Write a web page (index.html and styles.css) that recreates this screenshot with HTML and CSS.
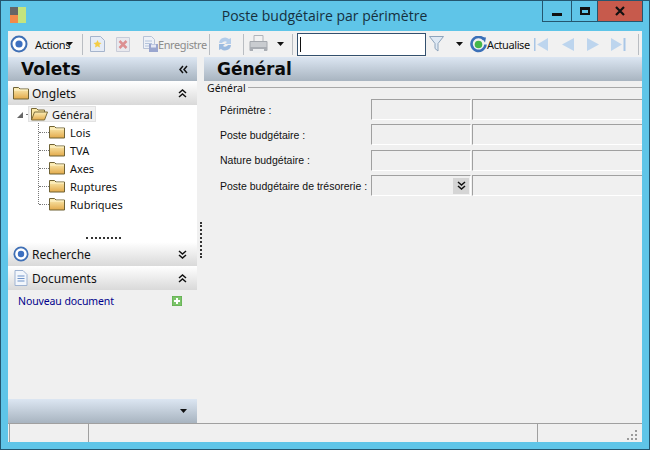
FILE: index.html
```html
<!DOCTYPE html>
<html lang="fr">
<head>
<meta charset="utf-8">
<title>Poste budgétaire par périmètre</title>
<link rel="stylesheet" href="styles.css">
</head>
<body>
<svg class="defs" width="0" height="0">
  <defs>
    <linearGradient id="fold" x1="0" y1="0" x2="0" y2="1"><stop offset="0" stop-color="#fdf0b8"/><stop offset="1" stop-color="#e2a94a"/></linearGradient>
    <symbol id="folder" viewBox="0 0 16 14"><path d="M.5 3V1.500h5L7 3h8.500v10H.5z" fill="url(#fold)" stroke="#6f6235"/><path d="M1 4h14" stroke="#fff6cf"/></symbol>
    <symbol id="target" viewBox="0 0 18 18"><circle cx="9" cy="9" r="7.500" fill="#fff" stroke="#3f6fb5" stroke-width="2"/><circle cx="9" cy="9" r="3.600" fill="#3c6fc0"/></symbol>
    <symbol id="dbl-up" viewBox="0 0 9 9"><path d="M1 4l3.500-3L8 4M1 8l3.500-3L8 8" fill="none" stroke="#111" stroke-width="1.500"/></symbol>
    <symbol id="dbl-down" viewBox="0 0 9 9"><path d="M1 1l3.500 3L8 1M1 5l3.500 3L8 5" fill="none" stroke="#111" stroke-width="1.500"/></symbol>
    <symbol id="caret" viewBox="0 0 7 4"><path d="M0 0h7L3.500 4z" fill="#111"/></symbol>
  </defs>
</svg>
<div class="window">
  <header class="titlebar">
    <svg class="applogo" width="21" height="24" viewBox="0 0 21 24"><rect width="8" height="8" y="0" fill="#666"/><rect x="8" width="8" height="16" fill="#c4e47e"/><rect y="8" width="8" height="8" fill="#f28a4a"/></svg>
    <div class="title">Poste budgétaire par périmètre</div>
    <div class="winbtns">
      <div class="winbtn"><span class="min"></span></div>
      <div class="winbtn"><span class="max"></span></div>
      <div class="winbtn close"><svg width="10" height="10" viewBox="0 0 10 10"><path d="M1 1l8 8M9 1l-8 8" stroke="#111" stroke-width="2.200"/></svg></div>
    </div>
  </header>
  <div class="client">
    <div class="toolbar">
      <svg class="m2" width="18" height="18"><use href="#target"/></svg>
      <span class="tbtext m-actions">Actions</span>
      <svg class="caret" width="7" height="4"><use href="#caret"/></svg>
      <span class="sep s1"></span>
      <svg class="m-new" width="15" height="16" viewBox="0 0 15 16"><path d="M.5.500h10l4 4v11H.5z" fill="#e6ecf6" stroke="#a5b4cc"/><path d="M7.500 4l1.200 2.600 2.800.3-2.100 1.900.6 2.800-2.500-1.400-2.500 1.400.6-2.800L3.500 6.900l2.800-.3z" fill="#f5cd45"/></svg>
      <svg class="m-del" width="14" height="15" viewBox="0 0 14 15"><path d="M.5.500h13v14H.5z" fill="#e9e9ee" stroke="#c8ccd8"/><path d="M3.500 4l7 7M10.500 4l-7 7" stroke="#dc8f92" stroke-width="2.500"/></svg>
      <svg class="m-save" width="15" height="16" viewBox="0 0 15 16"><path d="M.5.500h8l3 3v9H.5z" fill="#eef1f7" stroke="#b8c3d6"/><path d="M2 5h7M2 7.500h7M2 10h7" stroke="#b4c4dc"/><rect x="6" y="8" width="9" height="8" fill="#9aa6cf"/><rect x="8" y="8.500" width="5" height="3" fill="#e4e8f4"/></svg>
      <span class="tbtext dim m-enr">Enregistre</span>
      <span class="sep s2"></span>
      <svg class="m-sync" width="16" height="16" viewBox="0 0 16 16"><path d="M2 7a6 6 0 0 1 10-4l2-1v6H8l2-2a3.500 3.500 0 0 0-5 1z" fill="#b4cdea"/><path d="M14 9a6 6 0 0 1-10 4l-2 1V8h6l-2 2a3.500 3.500 0 0 0 5-1z" fill="#9cbbe0"/></svg>
      <span class="sep s3"></span>
      <svg class="m-print" width="19" height="18" viewBox="0 0 19 18"><path d="M5 .500h9v6H5z" fill="#f2f2f2" stroke="#b0b4ba"/><path d="M1 6.500h17v9H1z" fill="#c9ccd0" stroke="#a4a8ae"/><path d="M1 12h17v4H1z" fill="#a9adb3"/><path d="M4 14h11v4H4z" fill="#eceef0"/></svg>
      <svg class="caret m-c2" width="7" height="4"><use href="#caret"/></svg>
      <span class="sep s4"></span>
      <div class="search" role="textbox" aria-label="Recherche"></div>
      <svg class="m-filter" width="15" height="16" viewBox="0 0 15 16"><path d="M.5.500h14L9 7.500V15L6 12.500v-5z" fill="#dfe9f4" stroke="#8da4bc"/></svg>
      <svg class="caret m-c3" width="7" height="4"><use href="#caret"/></svg>
      <svg class="m-act" width="17" height="17" viewBox="0 0 17 17"><path d="M14 3.500A7 7 0 1 0 15.500 8.500" fill="none" stroke="#3b70b8" stroke-width="2.600"/><path d="M11 1l5 .5-1 5z" fill="#3b70b8"/><circle cx="8.500" cy="8.500" r="3.800" fill="#44b649"/></svg>
      <span class="tbtext m-actu">Actualise</span>
      <svg class="m-nav1" width="14" height="13" viewBox="0 0 14 13"><path d="M.5 0v13" stroke="#a9c6e6" stroke-width="2"/><path d="M14 0v13L3 6.500z" fill="#bdd5ee"/></svg>
      <svg class="m-nav2" width="13" height="13" viewBox="0 0 13 13"><path d="M13 0v13L1 6.500z" fill="#bdd5ee"/></svg>
      <svg class="m-nav3" width="12" height="13" viewBox="0 0 12 13"><path d="M0 0v13l12-6.500z" fill="#bdd5ee"/></svg>
      <svg class="m-nav4" width="15" height="13" viewBox="0 0 15 13"><path d="M0 0v13l11-6.500z" fill="#bdd5ee"/><path d="M13.500 0v13" stroke="#a9c6e6" stroke-width="2"/></svg>
      <span class="sep s5"></span>
    </div>
    <div class="main">
      <aside class="left">
        <div class="hdr">
          <h2>Volets</h2>
          <svg class="chev-left" width="9" height="9" viewBox="0 0 9 9"><path d="M4 1L1 4.500 4 8M8 1L5 4.500 8 8" fill="none" stroke="#111" stroke-width="1.500"/></svg>
        </div>
        <div class="bar">
          <svg class="baricon" width="16" height="14"><use href="#folder"/></svg>
          <span class="bartext">Onglets</span>
          <svg class="barchev" width="9" height="9"><use href="#dbl-up"/></svg>
        </div>
        <div class="treepane">
          <div class="tree">
            <div class="rootrow">
              <svg class="expander" width="6" height="6" viewBox="0 0 6 6"><path d="M6 0v6H0z" fill="#666"/></svg>
              <span class="hline short"></span>
              <div class="selected">
                <svg width="17" height="14" viewBox="0 0 17 14"><path d="M.5 13V1.500h5L7 3h6.500v2" fill="#fbe9a6" stroke="#7a6a38"/><path d="M.5 13l3-8h13l-3 8z" fill="url(#fold)" stroke="#7a6a38"/></svg>
                <span>Général</span>
              </div>
            </div>
            <div class="children">
              <div class="leaf"><span class="hline"></span><svg width="16" height="14"><use href="#folder"/></svg><span>Lois</span></div>
              <div class="leaf"><span class="hline"></span><svg width="16" height="14"><use href="#folder"/></svg><span>TVA</span></div>
              <div class="leaf"><span class="hline"></span><svg width="16" height="14"><use href="#folder"/></svg><span>Axes</span></div>
              <div class="leaf"><span class="hline"></span><svg width="16" height="14"><use href="#folder"/></svg><span>Ruptures</span></div>
              <div class="leaf last"><span class="hline"></span><svg width="16" height="14"><use href="#folder"/></svg><span>Rubriques</span></div>
            </div>
          </div>
          <div class="grip"></div>
        </div>
        <div class="bar">
          <svg class="baricon" width="16" height="16"><use href="#target"/></svg>
          <span class="bartext">Recherche</span>
          <svg class="barchev" width="9" height="9"><use href="#dbl-down"/></svg>
        </div>
        <div class="bar">
          <svg class="baricon" width="13" height="16" viewBox="0 0 13 16"><path d="M.5.500h8l4 4v11H.5z" fill="#f2f6fc" stroke="#9fb3d1"/><path d="M3 6h7M3 8.500h7M3 11h7" stroke="#6f93c8"/></svg>
          <span class="bartext docs">Documents</span>
          <svg class="barchev" width="9" height="9"><use href="#dbl-up"/></svg>
        </div>
        <div class="docpane">
          <span class="link">Nouveau document</span>
          <svg width="10" height="10" viewBox="0 0 10 10"><rect width="10" height="10" fill="#5aa84a"/><rect x=".5" y=".5" width="9" height="9" fill="#7cc46a"/><path d="M5 2v6M2 5h6" stroke="#fff" stroke-width="2"/></svg>
        </div>
        <div class="foldbar">
          <svg class="caret" width="7" height="4"><use href="#caret"/></svg>
        </div>
      </aside>
      <div class="splitter"><span class="dots"></span></div>
      <section class="right">
        <div class="hdr"><h2>Général</h2></div>
        <div class="group">
          <div class="legend"><span>Général</span><span class="rule"></span></div>
          <div class="field"><label>Périmètre :</label><div class="box b1"></div><div class="box b2"></div></div>
          <div class="field"><label>Poste budgétaire :</label><div class="box b1"></div><div class="box b2"></div></div>
          <div class="field"><label>Nature budgétaire :</label><div class="box b1"></div><div class="box b2"></div></div>
          <div class="field"><label>Poste budgétaire de trésorerie :</label><div class="box b1 combo"><span class="combobtn"><svg width="9" height="9"><use href="#dbl-down"/></svg></span></div><div class="box b2"></div></div>
        </div>
      </section>
    </div>
    <footer class="status">
      <div class="cell c1"></div>
      <div class="cell c2"></div>
      <div class="cell c3"><svg width="11" height="11" viewBox="0 0 11 11"><path d="M8 0h2v2H8zM4 4h2v2H4zM8 4h2v2H8zM0 8h2v2H0zM4 8h2v2H4zM8 8h2v2H8z" fill="#9a9a9a"/></svg></div>
    </footer>
  </div>
</div>
</body>
</html>
```
FILE: styles.css
```css
* { box-sizing: border-box; }
html, body { margin: 0; padding: 0; }
body { width: 650px; height: 450px; overflow: hidden; font-family: "Noto Sans", "Open Sans", sans-serif; font-size: 11px; color: #111; }
.defs { position: absolute; }
svg { display: block; flex: none; }

.window { width: 650px; height: 450px; background: #5fc5e8; border: 1px solid #24566f; display: flex; flex-direction: column; padding: 0 7px 7px; }
.titlebar { height: 30px; flex: none; display: flex; position: relative; }
.applogo { margin: 6px 0 0 2px; }
.title { position: absolute; left: 213px; top: 5px; width: 207px; text-align: center; font-family: "Open Sans", sans-serif; font-size: 14px; white-space: nowrap; color: #16303e; }
.winbtns { margin-left: auto; margin-right: -1px; display: flex; height: 21px; border: 1px solid #24566f; border-top: 0; }
.winbtn { width: 28px; border-left: 1px solid #24566f; display: flex; align-items: center; justify-content: center; }
.winbtn:first-child { border-left: 0; }
.winbtn:nth-child(2) { width: 26px; }
.winbtn.close { width: 45px; background: #c75a4c; }
.min { width: 10px; height: 3px; background: #111; margin-top: 6px; }
.max { width: 10px; height: 8px; border: 2px solid #111; border-top-width: 3px; }

.client { flex: 1; background: #f0f0f0; display: flex; flex-direction: column; min-height: 0; }
.toolbar { height: 26px; flex: none; display: flex; align-items: center; background: #f1f1f1; }
.tbtext { font-size: 11px; white-space: nowrap; letter-spacing: -.4px; flex: none; }
.tbtext.dim { color: #8b8b8b; }
.caret { flex: none; }
.sep { width: 1px; height: 21px; background: #b9bdc2; flex: none; }
.m2 { margin-left: 2px; }
.m-actions { margin-left: 7px; width: 31px; }
.s1 { margin-left: 9px; }
.m-new { margin-left: 7px; }
.m-del { margin-left: 11px; }
.m-save { margin-left: 13px; }
.m-enr { width: 47px; }
.s2 { margin-left: 4px; }
.m-sync { margin-left: 7px; }
.s3 { margin-left: 10px; }
.m-print { margin-left: 5px; }
.m-c2 { margin-left: 9px; }
.s4 { margin-left: 8px; }
.search { width: 129px; height: 23px; margin-left: 4px; padding: 3px 0 0 2px; border: 1px solid #33506e; background: #fff; flex: none; }
.search::before { content: ""; display: block; width: 1px; height: 15px; background: #111; }
.m-filter { margin-left: 3px; }
.m-c3 { margin-left: 12px; }
.m-act { margin-left: 7px; }
.m-actu { width: 43px; }
.m-nav1 { margin-left: 4px; }
.m-nav2 { margin-left: 13px; }
.m-nav3 { margin-left: 13px; }
.m-nav4 { margin-left: 12px; }
.s5 { margin-left: 12px; }

.main { flex: 1; display: flex; min-height: 0; }
.left { width: 189px; flex: none; display: flex; flex-direction: column; }
.splitter { width: 7px; flex: none; display: flex; align-items: center; justify-content: center; }
.dots { width: 0; height: 36px; border-left: 2px dotted #333; }
.right { flex: 1; min-width: 0; display: flex; flex-direction: column; }

.hdr { height: 24px; flex: none; display: flex; align-items: center; background: linear-gradient(#dce6f2, #a8b4c0); }
.hdr h2 { margin: 0 0 0 13px; font: bold 17px "DejaVu Sans", sans-serif; color: #0a0a0a; }
.chev-left { margin-left: auto; margin-right: 9px; }

.bar { height: 24px; flex: none; display: flex; align-items: center; background: linear-gradient(#ffffff, #d9d9d9); padding-left: 5px; }
.baricon { width: 16px; }
.bartext { margin-left: 3px; font-size: 12px; }
.barchev { margin-left: auto; margin-right: 10px; }

.treepane { height: 137px; flex: none; background: #fff; display: flex; flex-direction: column; }
.tree { flex: 1; padding-top: 1px; font-size: 11px; }
.rootrow { display: flex; align-items: center; height: 16px; margin-left: 9px; }
.expander { margin-right: 3px; margin-top: 1px; }
.hline { display: block; width: 9px; height: 0; border-top: 1px dotted #777; flex: none; }
.hline.short { width: 2px; }
.selected { display: flex; align-items: center; height: 16px; padding: 0 2px; gap: 4px; background: #f0f0f0; border: 1px solid #e2e2e2; }
.children { margin: 1px 0 0 30px; border-left: 1px dotted #777; height: 81px; display: flex; flex-direction: column; }
.leaf { height: 18px; display: flex; align-items: center; flex: none; }
.leaf .hline { width: 10px; }
.leaf span:last-child { margin-left: 5px; }
.grip { height: 3px; width: 35px; margin: 0 0 2px 78px; border-top: 2px dotted #333; }

.docpane { padding: 0 15px 0 10px; display: flex; align-items: center; justify-content: space-between; height: 22px; flex: none; }
.link { color: #00008b; font-size: 10.500px; letter-spacing: -.1px; }
.foldbar { margin-top: auto; height: 24px; flex: none; background: linear-gradient(#dce6f2, #a8b4c0); display: flex; align-items: center; justify-content: flex-end; padding-right: 10px; }

.group { flex: 1; padding: 0 0 0 3px; overflow: hidden; }
.legend { display: flex; align-items: center; height: 13px; margin-bottom: 3px; font-size: 10.500px; }
.rule { flex: 1; height: 1px; background: #a8a8a8; margin-left: 2px; margin-top: -1px; }
.field { display: flex; height: 25.300px; align-items: center; }
.field label { width: 164px; padding-left: 13px; white-space: nowrap; font-family: "Liberation Sans", sans-serif; font-size: 10.500px; flex: none; }
.box { height: 21px; border-top: 1px solid #a0a0a0; border-left: 1px solid #a0a0a0; border-bottom: 1px solid #fff; }
.b1 { width: 100px; border-right: 1px solid #fff; }
.b2 { flex: 1; margin-left: 1px; }
.combo { display: flex; align-items: center; justify-content: flex-end; padding-right: 1px; }
.combobtn { width: 16px; height: 16px; background: #d5d5d5; display: flex; align-items: center; justify-content: center; }

.status { height: 19px; flex: none; display: flex; background: #f0f0f0; border-top: 1px solid #a0a0a0; }
.cell { border-left: 1px solid #a0a0a0; height: 18px; }
.c1 { width: 79px; margin-left: 1px; }
.c2 { flex: 1; }
.c3 { width: 105px; display: flex; justify-content: flex-end; align-items: flex-end; padding: 0 4px 1px 0; }
```
